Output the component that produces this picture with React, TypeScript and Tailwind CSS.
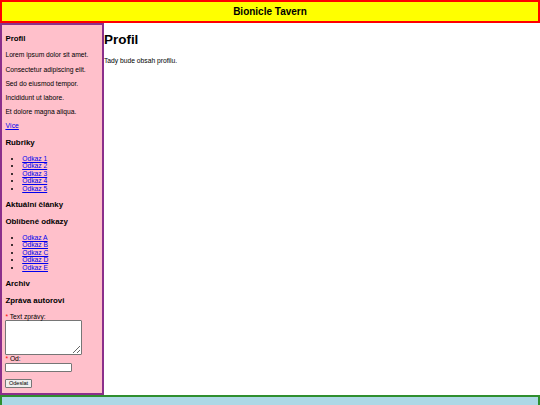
const topics = ['Odkaz 1', 'Odkaz 2', 'Odkaz 3', 'Odkaz 4', 'Odkaz 5'];
const favourites = ['Odkaz A', 'Odkaz B', 'Odkaz C', 'Odkaz D', 'Odkaz E'];
const lines = [
  'Lorem ipsum dolor sit amet.',
  'Consectetur adipiscing elit.',
  'Sed do eiusmod tempor.',
  'Incididunt ut labore.',
  'Et dolore magna aliqua.',
];

export default function App() {
  return (
    <div className="bg-white font-['Liberation_Sans',Arial,sans-serif] text-[6.72px] leading-[7.5px] text-black">
      <header className="flex h-[23px] items-center justify-center border-2 border-[#f00] bg-[#ff0]">
        <h1 className="text-[10px] font-bold leading-[11.5px]">Bionicle Tavern</h1>
      </header>
      <div className="flex items-start">
        <aside className="w-[104px] shrink-0 border-2 border-[#8b2f8b] bg-[#ffc0cb] px-[3.4px] pt-[1.6px] pb-[5px]">
          <SideHeading>Profil</SideHeading>
          {lines.map((line) => (
            <p className="my-[6.72px]" key={line}>
              {line}
            </p>
          ))}
          <p className="my-[6.72px]">
            <a className="text-[#0000ee] underline" href="#">
              Více
            </a>
          </p>
          <SideHeading>Rubriky</SideHeading>
          <LinkList items={topics} />
          <SideHeading>Aktuální články</SideHeading>
          <SideHeading>Oblíbené odkazy</SideHeading>
          <LinkList items={favourites} />
          <SideHeading>Archiv</SideHeading>
          <SideHeading>Zpráva autorovi</SideHeading>
          <form className="mt-[7.86px]" onSubmit={(e) => e.preventDefault()}>
            <label className="block">
              <span className="text-[#f00]">*</span> Text zprávy:
            </label>
            <textarea className="block h-[35px] w-[77px] rounded-[1px] border border-[#767676] bg-white" />
            <label className="block">
              <span className="text-[#f00]">*</span> Od:
            </label>
            <input className="block h-[9px] w-[67px] rounded-[1px] border border-[#767676] bg-white" type="text" />
            <div className="mt-[6.72px]">
              <button
                className="h-[9px] rounded-[1px] border border-[#767676] bg-[#efefef] px-[2.5px] text-[5.6px] leading-[7px]"
                type="submit"
              >
                Odeslat
              </button>
            </div>
          </form>
        </aside>
        <main className="flex-1">
          <h1 className="my-[9px] text-[13.44px] font-bold leading-[15.5px]">Profil</h1>
          <p className="my-[6.72px]">Tady bude obsah profilu.</p>
        </main>
      </div>
      <footer className="h-[40px] border-2 border-[#2f8f2f] bg-[#add8e6]" />
    </div>
  );
}

function SideHeading({ children }: { children: string }) {
  return <h3 className="my-[7.86px] text-[7.86px] font-bold leading-[9px]">{children}</h3>;
}

function LinkList({ items }: { items: string[] }) {
  return (
    <ul className="my-[6.72px] list-disc pl-[16.8px]">
      {items.map((item) => (
        <li key={item}>
          <a className="text-[#0000ee] underline" href="#">
            {item}
          </a>
        </li>
      ))}
    </ul>
  );
}
